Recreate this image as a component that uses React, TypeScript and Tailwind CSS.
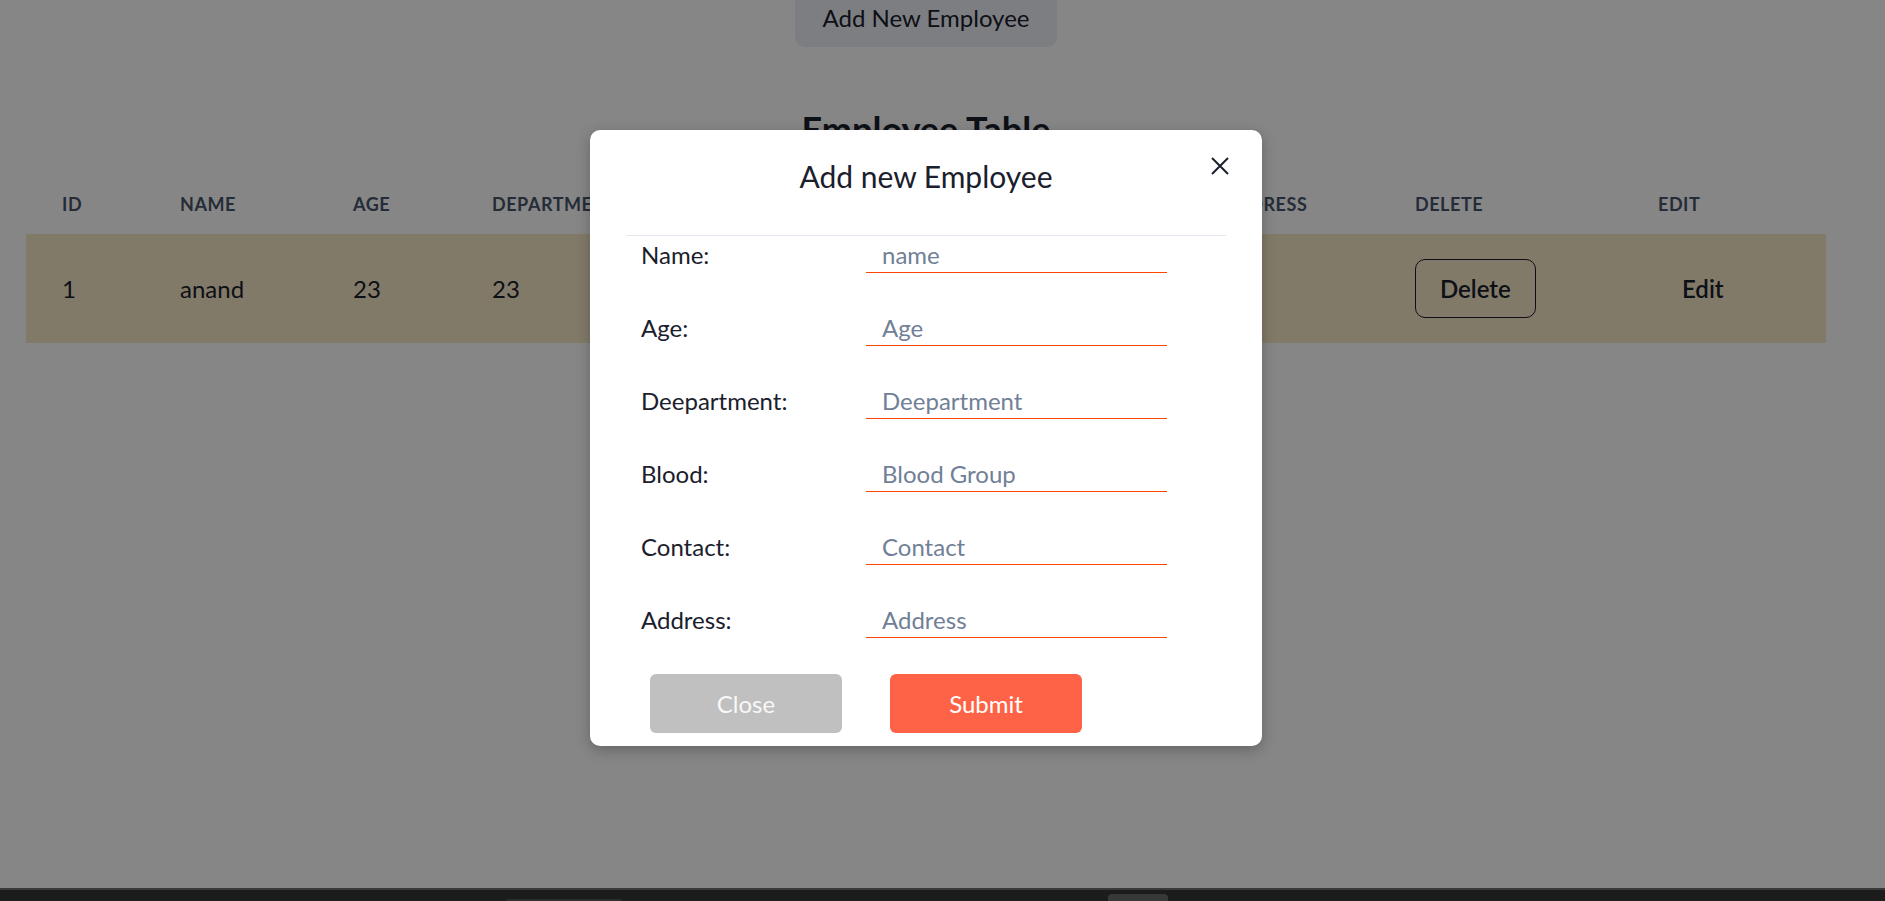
import React from "react";

const headers = [
  { label: "ID", w: "w-[118px]" },
  { label: "Name", w: "w-[173px]" },
  { label: "Age", w: "w-[139px]" },
  { label: "Department", w: "w-[244px]" },
  { label: "Blood", w: "w-[250px]" },
  { label: "Contact", w: "w-[236px]" },
  { label: "Address", w: "w-[193px]" },
  { label: "Delete", w: "w-[243px]" },
  { label: "Edit", w: "w-[204px]" },
];

const fields = [
  { label: "Name:", ph: "name" },
  { label: "Age:", ph: "Age" },
  { label: "Deepartment:", ph: "Deepartment" },
  { label: "Blood:", ph: "Blood Group" },
  { label: "Contact:", ph: "Contact" },
  { label: "Address:", ph: "Address" },
];

export default function App() {
  return (
    <div className="w-[1885px] h-[901px] overflow-hidden flex flex-col bg-[#1c1c1c] font-['Lato','Open_Sans',sans-serif]">
      <div className="relative h-[888px] shrink-0 bg-white overflow-hidden">
        {/* page */}
        <div className="w-[1852px]">
          <div className="flex flex-col items-center mt-[-12px]">
            <button className="w-[262px] h-[59px] rounded-[10px] bg-[#edf0f6] text-[24px] leading-[36px] text-[#1a202c]">
              Add New Employee
            </button>
            <h1 className="mt-[55px] text-[36px] leading-[54px] font-bold text-[#1a202c]">Employee Table</h1>
          </div>
          <div className="mx-[26px] w-[1800px] mt-[18px]">
            <div className="flex h-[60px] items-center">
              {headers.map((h) => (
                <div
                  key={h.label}
                  className={`${h.w} shrink-0 px-[36px] text-[18px] leading-[27px] font-bold uppercase tracking-[0.03em] text-[#48546a]`}
                >
                  {h.label}
                </div>
              ))}
            </div>
            <div className="flex h-[109px] items-center bg-[#f8e9c8] text-[24px] leading-[36px] text-[#1a202c]">
              <div className="w-[118px] shrink-0 px-[36px]">1</div>
              <div className="w-[173px] shrink-0 px-[36px]">anand</div>
              <div className="w-[139px] shrink-0 px-[36px]">23</div>
              <div className="w-[244px] shrink-0 px-[36px]">23</div>
              <div className="w-[250px] shrink-0 px-[36px]">O+</div>
              <div className="w-[236px] shrink-0 px-[36px]">9876</div>
              <div className="w-[193px] shrink-0 px-[36px]"></div>
              <div className="w-[243px] shrink-0 px-[36px]">
                <button className="h-[59px] px-[24px] rounded-[10px] border border-[#1a202c] leading-[36px] font-semibold">
                  Delete
                </button>
              </div>
              <div className="w-[204px] shrink-0 px-[36px]">
                <button className="h-[59px] px-[24px] leading-[36px] font-semibold">Edit</button>
              </div>
            </div>
          </div>
        </div>

        {/* overlay */}
        <div className="absolute inset-0 bg-black/[0.475]" />

        {/* modal */}
        <div className="absolute left-[590px] top-[130px] w-[672px] rounded-[10px] bg-white shadow-[0_4px_14px_rgba(0,0,0,0.25)] pt-[24px] pb-[13px]">
          <button className="absolute right-[33px] top-[27px] w-[18px] h-[18px] text-[#1a202c]">
            <svg width="18" height="18" viewBox="0 0 18 18" fill="none">
              <path d="M1 1L17 17M17 1L1 17" stroke="currentColor" strokeWidth="2" />
            </svg>
          </button>
          <h2 className="text-center text-[30px] leading-[45px] text-[#1a202c]">Add new Employee</h2>
          <div className="mx-[36px] mt-[36px] h-px bg-[#e2e8f0]" />
          <div className="flex flex-col gap-[36px] pl-[51px]">
            {fields.map((f) => (
              <div key={f.label} className="flex items-center h-[37px]">
                <label className="w-[225px] shrink-0 text-[24px] leading-[36px] text-[#1a202c]">{f.label}</label>
                <input
                  placeholder={f.ph}
                  className="w-[301px] h-[37px] border-b border-[#ff4500] bg-transparent pl-[16px] text-[24px] leading-[36px] text-[#1a202c] placeholder:text-[#718096] outline-none"
                />
              </div>
            ))}
          </div>
          <div className="flex gap-[48px] pl-[60px] mt-[36px]">
            <button className="w-[192px] h-[59px] rounded-[6px] bg-[#c0c0c0] text-[24px] text-[#f8f8f8]">Close</button>
            <button className="w-[192px] h-[59px] rounded-[6px] bg-[#ff6347] text-[24px] text-white">Submit</button>
          </div>
        </div>
      </div>
      {/* taskbar */}
      <div className="relative flex-1 border-t-2 border-[#3a3a3a] bg-[#1c1c1c]">
        <div className="absolute left-[505px] top-[9px] w-[118px] h-[6px] rounded-t-[4px] bg-[#2e2e2e]" />
        <div className="absolute left-[1108px] top-[4px] w-[60px] h-[10px] rounded-t-[4px] bg-[#383838]" />
      </div>
    </div>
  );
}
